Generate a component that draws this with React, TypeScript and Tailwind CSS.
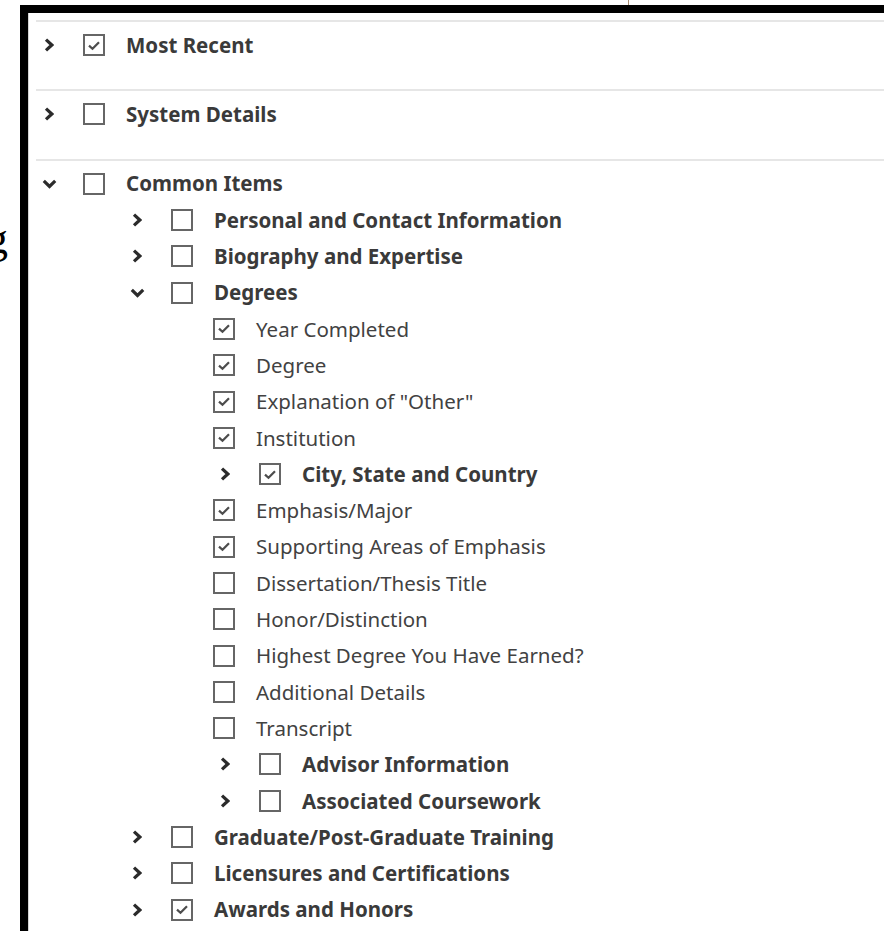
import React from 'react';

type Node = {
  label: string;
  checked?: boolean;
  open?: boolean;
  children?: Node[];
  leaf?: boolean;
};

const SECTIONS: Node[] = [
  { label: 'Most Recent', checked: true },
  { label: 'System Details' },
  {
    label: 'Common Items',
    open: true,
    children: [
      { label: 'Personal and Contact Information' },
      { label: 'Biography and Expertise' },
      {
        label: 'Degrees',
        open: true,
        children: [
          { label: 'Year Completed', checked: true, leaf: true },
          { label: 'Degree', checked: true, leaf: true },
          { label: 'Explanation of "Other"', checked: true, leaf: true },
          { label: 'Institution', checked: true, leaf: true },
          { label: 'City, State and Country', checked: true },
          { label: 'Emphasis/Major', checked: true, leaf: true },
          { label: 'Supporting Areas of Emphasis', checked: true, leaf: true },
          { label: 'Dissertation/Thesis Title', leaf: true },
          { label: 'Honor/Distinction', leaf: true },
          { label: 'Highest Degree You Have Earned?', leaf: true },
          { label: 'Additional Details', leaf: true },
          { label: 'Transcript', leaf: true },
          { label: 'Advisor Information' },
          { label: 'Associated Coursework' },
        ],
      },
      { label: 'Graduate/Post-Graduate Training' },
      { label: 'Licensures and Certifications' },
      { label: 'Awards and Honors', checked: true },
    ],
  },
];

const INDENT = 88;

const Chevron = ({ open }: { open?: boolean }) =>
  open ? (
    <svg width="15" height="10" viewBox="0 0 15 10" fill="none">
      <polyline points="1.8,1.8 7.5,7.4 13.2,1.8" stroke="#2b2b2b" strokeWidth="3.2" />
    </svg>
  ) : (
    <svg width="10" height="14" viewBox="0 0 10 14" fill="none">
      <polyline points="2,1.6 7.8,7 2,12.4" stroke="#2b2b2b" strokeWidth="3.2" />
    </svg>
  );

const Checkbox = ({ checked }: { checked?: boolean }) => (
  <span className="flex h-[22px] w-[22px] shrink-0 items-center justify-center border-2 border-[#666] bg-white">
    {checked && (
      <svg width="14" height="11" viewBox="0 0 14 11" fill="none">
        <polyline points="2,5.6 5.5,8.8 12,2.2" stroke="#4d4d4d" strokeWidth="2.2" />
      </svg>
    )}
  </span>
);

const Row = ({ node, depth }: { node: Node; depth: number }) => {
  const pad = 5 + depth * INDENT;
  if (node.leaf) {
    return (
      <div className="flex h-[36.3px] items-center" style={{ paddingLeft: pad - 4 }}>
        <Checkbox checked={node.checked} />
        <span className="ml-[21px] font-normal text-[#424242]">{node.label}</span>
      </div>
    );
  }
  return (
    <div className="flex h-[36.3px] items-center" style={{ paddingLeft: pad }}>
      <span className="flex w-[16px] shrink-0 items-center justify-center">
        <Chevron open={node.open} />
      </span>
      <span className="ml-[26px]">
        <Checkbox checked={node.checked} />
      </span>
      <span className="ml-[21px] font-bold text-[#3a3a3a]">{node.label}</span>
    </div>
  );
};

const Tree = ({ nodes, depth }: { nodes: Node[]; depth: number }) => (
  <>
    {nodes.map((n) => (
      <React.Fragment key={n.label}>
        <Row node={n} depth={depth} />
        {n.open && n.children && <Tree nodes={n.children} depth={depth + 1} />}
      </React.Fragment>
    ))}
  </>
);

export default function App() {
  return (
    <div className="flex h-[931px] flex-col overflow-hidden bg-white font-['Noto_Sans',sans-serif] text-[20.5px] leading-none">
      {/* strip above the panel */}
      <div className="h-[5px] shrink-0">
        <div className="ml-[628px] h-full w-px bg-[#a88c70]" />
      </div>

      <div className="flex min-h-0 flex-1">
        {/* clipped heading text to the left of the panel */}
        <div className="w-[20px] shrink-0 overflow-hidden">
          <div className="-ml-[14px] mt-[212px] font-['Liberation_Serif',serif] text-[44px] leading-none text-black">
            g
          </div>
        </div>

        <div className="flex-1 border-l-8 border-t-8 border-black">
          <div className="h-full border-l border-[#d4d4d4] pl-[7px] pt-[7px]">
            {SECTIONS.map((s) => (
              <section key={s.label} className="border-t-2 border-[#e6e6e6] pb-[26px] pt-[5px]">
                <Tree nodes={[s]} depth={0} />
              </section>
            ))}
          </div>
        </div>
      </div>
    </div>
  );
}
